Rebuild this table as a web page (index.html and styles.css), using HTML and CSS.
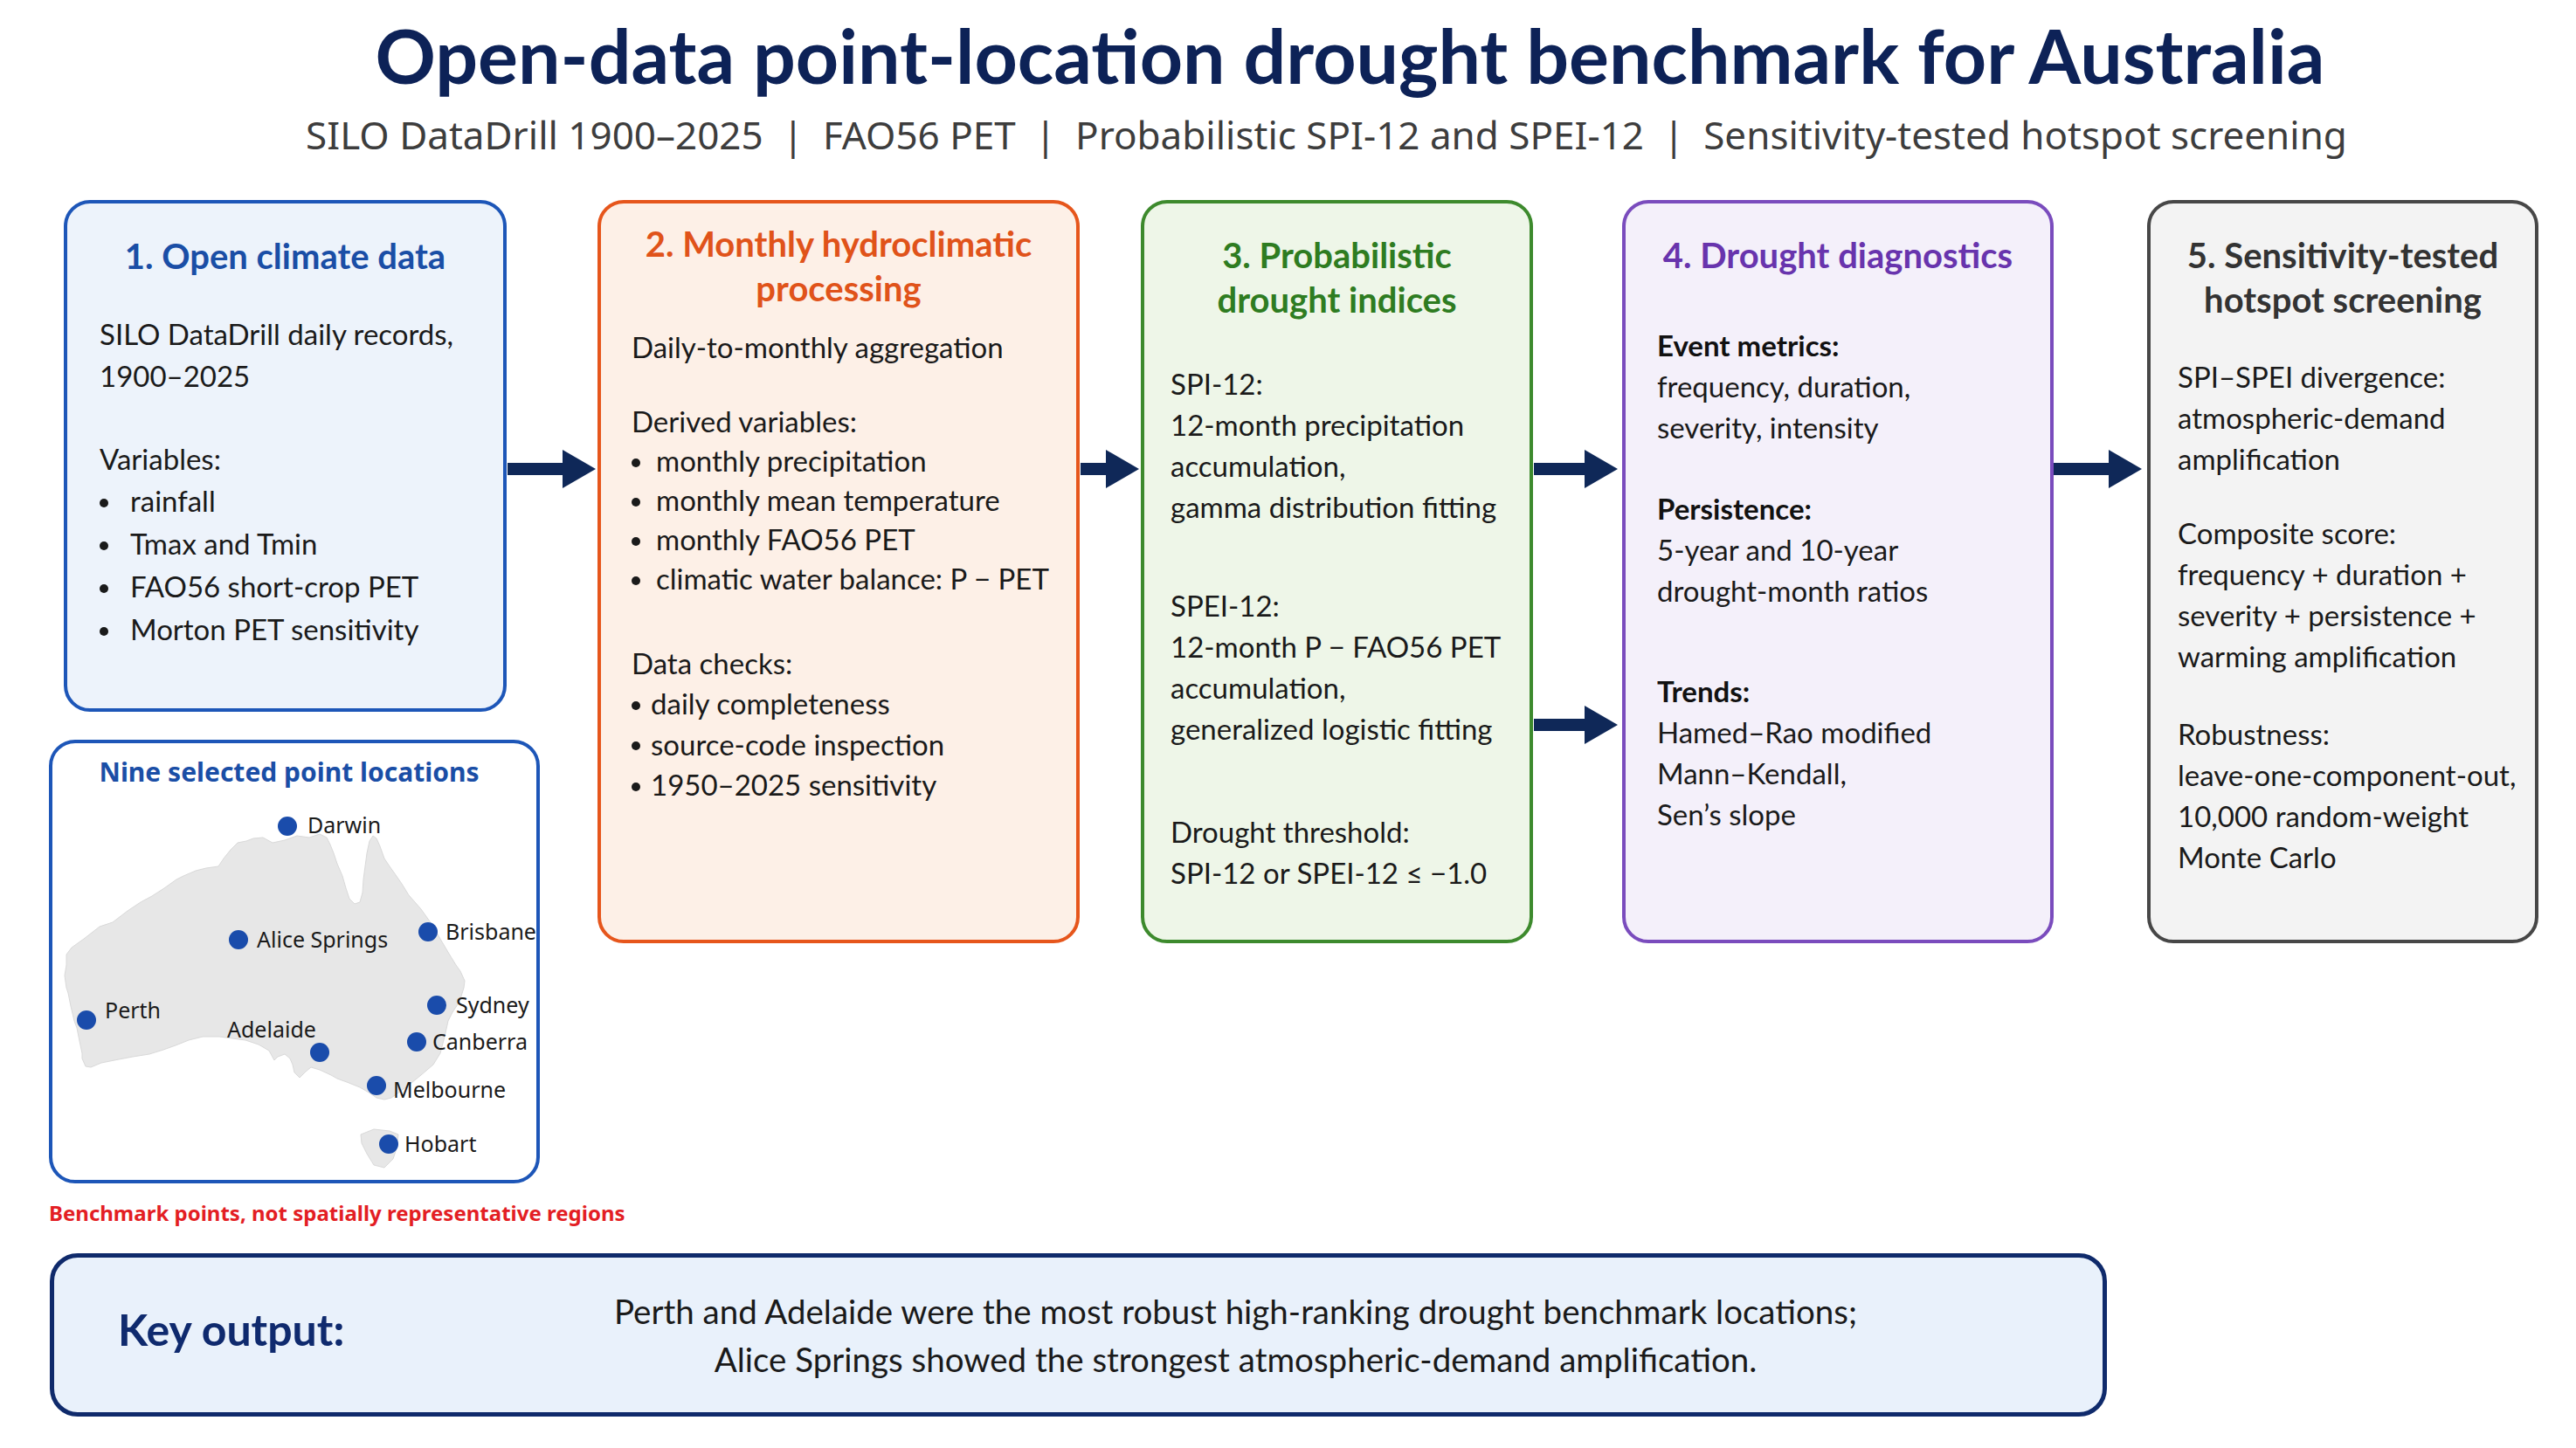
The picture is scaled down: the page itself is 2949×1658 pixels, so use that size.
FILE: index.html
```html
<!DOCTYPE html>
<html lang="en">
<head>
<meta charset="utf-8">
<title>Open-data point-location drought benchmark for Australia</title>
<link rel="stylesheet" href="styles.css">
</head>
<body>
<header class="head">
  <h1 class="title">Open-data point-location drought benchmark for Australia</h1>
  <p class="subtitle">SILO DataDrill 1900–2025<span class="sep">|</span>FAO56 PET<span class="sep">|</span>Probabilistic SPI-12 and SPEI-12<span class="sep">|</span>Sensitivity-tested hotspot screening</p>
</header>

<main class="flow">
  <div class="col1">
    <section class="card c1">
      <h2 class="ctitle">1. Open climate data</h2>
      <p class="g g1a">SILO DataDrill daily records,<br>1900–2025</p>
      <p class="g g1b">Variables:</p>
      <ul class="bul b1">
        <li>rainfall</li>
        <li>Tmax and Tmin</li>
        <li>FAO56 short-crop PET</li>
        <li>Morton PET sensitivity</li>
      </ul>
    </section>

    <section class="mapbox">
      <h3 class="maptitle">Nine selected point locations</h3>
      <svg class="map" viewBox="4 4 554 500" width="554" height="500" aria-label="Map of Australia with nine point locations">
        <path class="land" d="M20,246 L26,238 L40,228 L58,214 L73,209 L90,196 L105,186 L118,179 L132,170 L146,160 L154,156 L168,150 L180,147 L194,145 L200,136 L208,126 L216,118 L226,116 L234,113 L245,112 L256,118 L270,115 L284,110 L298,112 L310,108 L318,112 L322,120 L326,130 L330,142 L336,156 L340,170 L344,182 L350,188 L356,186 L359,175 L360,160 L362,145 L364,130 L367,116 L371,110 L375,113 L379,122 L384,136 L390,145 L395,152 L404,165 L412,178 L426,194 L436,208 L448,228 L458,245 L466,258 L471,265 L476,276 L475,284 L470,300 L462,312 L457,322 L453,340 L448,359 L440,372 L426,384 L410,397 L392,410 L384,412 L375,410 L368,405 L356,398 L341,392 L330,388 L323,384 L310,378 L300,375 L294,380 L287,387 L281,381 L279,372 L276,365 L270,360 L262,363 L258,367 L252,356 L240,349 L225,344 L210,342 L195,340 L176,340 L160,344 L145,350 L131,355 L115,360 L96,363 L80,366 L60,370 L48,375 L42,374 L38,365 L38,359 L35,345 L32,330 L29,322 L25,305 L22,290 L20,284 L18,270 L20,258 Z"/>
        <path class="land" d="M357,452 L372,446 L390,448 L400,452 L398,468 L394,480 L384,490 L372,487 L364,474 L358,462 Z"/>
        <g class="dots">
          <circle cx="273" cy="99" r="11"/>
          <circle cx="217" cy="229" r="11"/>
          <circle cx="434" cy="220" r="11"/>
          <circle cx="43" cy="321" r="11"/>
          <circle cx="310" cy="358" r="11"/>
          <circle cx="444" cy="304" r="11"/>
          <circle cx="421" cy="346" r="11"/>
          <circle cx="375" cy="396" r="11"/>
          <circle cx="389" cy="463" r="11"/>
        </g>
        <g class="labels">
          <text x="296" y="107">Darwin</text>
          <text x="238" y="238">Alice Springs</text>
          <text x="454" y="229">Brisbane</text>
          <text x="64" y="319">Perth</text>
          <text x="204" y="341">Adelaide</text>
          <text x="466" y="313">Sydney</text>
          <text x="439" y="355">Canberra</text>
          <text x="394" y="410">Melbourne</text>
          <text x="407" y="472">Hobart</text>
        </g>
      </svg>
    </section>
    <p class="caveat">Benchmark points, not spatially representative regions</p>
  </div>

  <div class="gap gap1"><div class="arrow"><span class="shaft"></span><span class="tip"></span></div></div>

  <section class="card c2">
    <h2 class="ctitle">2. Monthly hydroclimatic<br>processing</h2>
    <p class="g g2a">Daily-to-monthly aggregation</p>
    <p class="g g2b">Derived variables:</p>
    <ul class="bul b2">
      <li>monthly precipitation</li>
      <li>monthly mean temperature</li>
      <li>monthly FAO56 PET</li>
      <li>climatic water balance: P − PET</li>
    </ul>
    <p class="g g2c">Data checks:</p>
    <ul class="bul b3">
      <li>daily completeness</li>
      <li>source-code inspection</li>
      <li>1950–2025 sensitivity</li>
    </ul>
  </section>

  <div class="gap gap2"><div class="arrow"><span class="shaft"></span><span class="tip"></span></div></div>

  <section class="card c3">
    <h2 class="ctitle">3. Probabilistic<br>drought indices</h2>
    <p class="g g3a">SPI-12:<br>12-month precipitation<br>accumulation,<br>gamma distribution fitting</p>
    <p class="g g3b">SPEI-12:<br>12-month P − FAO56 PET<br>accumulation,<br>generalized logistic fitting</p>
    <p class="g g3c">Drought threshold:<br>SPI-12 or SPEI-12 ≤ −1.0</p>
  </section>

  <div class="gap gap3">
    <div class="arrow"><span class="shaft"></span><span class="tip"></span></div>
    <div class="arrow arrow-low"><span class="shaft"></span><span class="tip"></span></div>
  </div>

  <section class="card c4">
    <h2 class="ctitle">4. Drought diagnostics</h2>
    <p class="g g4a"><b>Event metrics:</b><br>frequency, duration,<br>severity, intensity</p>
    <p class="g g4b"><b>Persistence:</b><br>5-year and 10-year<br>drought-month ratios</p>
    <p class="g g4c"><b>Trends:</b><br>Hamed–Rao modified<br>Mann–Kendall,<br>Sen’s slope</p>
  </section>

  <div class="gap gap4"><div class="arrow"><span class="shaft"></span><span class="tip"></span></div></div>

  <section class="card c5">
    <h2 class="ctitle">5. Sensitivity-tested<br>hotspot screening</h2>
    <p class="g g5a">SPI–SPEI divergence:<br>atmospheric-demand<br>amplification</p>
    <p class="g g5b">Composite score:<br>frequency + duration +<br>severity + persistence +<br>warming amplification</p>
    <p class="g g5c">Robustness:<br>leave-one-component-out,<br>10,000 random-weight<br>Monte Carlo</p>
  </section>
</main>

<section class="keybox">
  <div class="keylabel">Key output:</div>
  <p class="keytext">Perth and Adelaide were the most robust high-ranking drought benchmark locations;<br>Alice Springs showed the strongest atmospheric-demand amplification.</p>
</section>
</body>
</html>
```

FILE: styles.css
```css
html, body {
  margin: 0;
  padding: 0;
}

body {
  width: 2949px;
  height: 1658px;
  overflow: hidden;
  background: #ffffff;
  color: #1a1a1a;
  font-family: Lato, "Noto Sans", "DejaVu Sans", sans-serif;
}

h1, h2, h3, p, ul {
  margin: 0;
  padding: 0;
}

/* ---------- header ---------- */
.head {
  padding-top: 13px;
}

.title {
  font-size: 86px;
  line-height: 100px;
  font-weight: 700;
  color: #0d2257;
  text-align: center;
  padding-left: 142px;
  white-space: nowrap;
}

.subtitle {
  margin-top: 11px;
  font-family: "Noto Sans", "DejaVu Sans", sans-serif;
  font-size: 44px;
  line-height: 60px;
  color: #3d3d3d;
  text-align: center;
  padding-left: 88px;
  white-space: nowrap;
}

.sep {
  margin: 0 22px;
}

/* ---------- flow row ---------- */
.flow {
  display: flex;
  align-items: flex-start;
  margin-top: 45px;
  padding-left: 73px;
}

.col1 {
  width: 507px;
  display: flex;
  flex-direction: column;
}

.card {
  box-sizing: border-box;
  border: 4px solid;
  border-radius: 30px;
  flex: none;
}

.ctitle {
  font-size: 40px;
  font-weight: 700;
  line-height: 50.5px;
  text-align: center;
  white-space: nowrap;
}

.g {
  font-size: 33px;
  line-height: 47px;
  white-space: nowrap;
}

.g b {
  font-weight: 700;
  color: #111;
}

.bul {
  list-style: none;
  font-size: 33px;
  white-space: nowrap;
}

.bul li::before {
  content: "";
  display: inline-block;
  width: 10px;
  height: 10px;
  border-radius: 50%;
  background: #1a1a1a;
  vertical-align: middle;
  position: relative;
  top: -2px;
}

/* card 1 */
.c1 {
  width: 507px;
  height: 586px;
  border-color: #1d56b8;
  background: #edf3fb;
  padding: 35px 20px 0 37px;
}
.c1 .ctitle { color: #1a4ea6; line-height: 50px; padding-right: 17px; }
.g1a { margin-top: 40px; line-height: 48px; }
.g1b { margin-top: 47px; line-height: 48px; }
.b1 li { line-height: 49px; }
.b1 li::before { margin-right: 25px; }

/* map */
.mapbox {
  position: relative;
  box-sizing: border-box;
  width: 562px;
  height: 508px;
  margin: 32px 0 0 -17px;
  border: 4px solid #1d56b8;
  border-radius: 30px;
  background: #ffffff;
  padding-top: 13px;
}

.maptitle {
  font-family: "Noto Sans", "DejaVu Sans", sans-serif;
  font-size: 30px;
  line-height: 40px;
  font-weight: 700;
  color: #1a4ea6;
  text-align: center;
  white-space: nowrap;
  padding-right: 12px;
}

.map {
  position: absolute;
  left: 0;
  top: 0;
  display: block;
}

.land {
  fill: #e7e7e7;
  stroke: #d9d9d9;
  stroke-width: 1;
}

.dots circle {
  fill: #1a4cab;
}

.labels text {
  font-family: "Noto Sans", "DejaVu Sans", sans-serif;
  font-size: 25px;
  fill: #1a1a1a;
}

.caveat {
  margin: 17px 0 0 -17px;
  font-family: "Noto Sans", "DejaVu Sans", sans-serif;
  font-size: 24px;
  line-height: 34px;
  font-weight: 700;
  color: #e31e24;
  white-space: nowrap;
}

/* card 2 */
.c2 {
  width: 552px;
  height: 851px;
  border-color: #e6561c;
  background: #fdf0e7;
  padding: 21px 20px 0 35px;
}
.c2 .ctitle { color: #e0531a; padding-right: 15px; }
.g2a { margin-top: 19px; line-height: 46px; }
.g2b { margin-top: 40px; line-height: 45px; }
.b2 li { line-height: 45px; }
.b2 li::before { margin-right: 18px; }
.g2c { margin-top: 52px; line-height: 45px; }
.b3 li { line-height: 46.5px; }
.b3 li::before { margin-right: 12px; }

/* card 3 */
.c3 {
  width: 449px;
  height: 851px;
  border-color: #3d8a2d;
  background: #eef6e8;
  padding: 34px 20px 0 30px;
}
.c3 .ctitle { color: #2e7c21; padding-right: 10px; }
.g3a { margin-top: 48px; }
.g3b { margin-top: 66px; }
.g3c { margin-top: 71px; }

/* card 4 */
.c4 {
  width: 494px;
  height: 851px;
  border-color: #7a4cbd;
  background: #f4f0fa;
  padding: 34px 20px 0 36px;
}
.c4 .ctitle { color: #6834ad; line-height: 50px; padding-right: 16px; }
.g4a { margin-top: 55px; }
.g4b { margin-top: 46px; }
.g4c { margin-top: 68px; }

/* card 5 */
.c5 {
  width: 448px;
  height: 851px;
  border-color: #474747;
  background: #f3f3f3;
  padding: 34px 20px 0 31px;
}
.c5 .ctitle { color: #333333; padding-right: 11px; }
.g5a { margin-top: 40px; }
.g5b { margin-top: 38px; }
.g5c { margin-top: 42px; }

/* ---------- arrows ---------- */
.gap {
  flex: none;
  box-sizing: border-box;
  padding-top: 286px;
  padding-right: 2px;
}
.gap1 { width: 104px; padding-left: 1px; }
.gap2 { width: 70px; padding-left: 1px; }
.gap3 { width: 102px; padding-left: 1px; padding-right: 5px; }
.gap4 { width: 107px; padding-right: 6px; }

.arrow {
  display: flex;
  align-items: center;
  height: 44px;
}

.arrow-low {
  margin-top: 249px;
}

.shaft {
  flex: 1;
  height: 14px;
  background: #0f2858;
}

.tip {
  flex: none;
  width: 0;
  height: 0;
  border-top: 22px solid transparent;
  border-bottom: 22px solid transparent;
  border-left: 38px solid #0f2858;
}

/* ---------- key output ---------- */
.keybox {
  box-sizing: border-box;
  display: flex;
  align-items: center;
  width: 2355px;
  height: 187px;
  margin: 29px 0 0 57px;
  padding-left: 73px;
  border: 5px solid #0f2a6b;
  border-radius: 32px;
  background: #e9f1fb;
}

.keylabel {
  flex: none;
  width: 287px;
  font-size: 50px;
  font-weight: 700;
  color: #0f2a6e;
  white-space: nowrap;
  padding-bottom: 14px;
}

.keytext {
  flex: 1;
  font-size: 38.5px;
  line-height: 55px;
  text-align: center;
  white-space: nowrap;
}
```
